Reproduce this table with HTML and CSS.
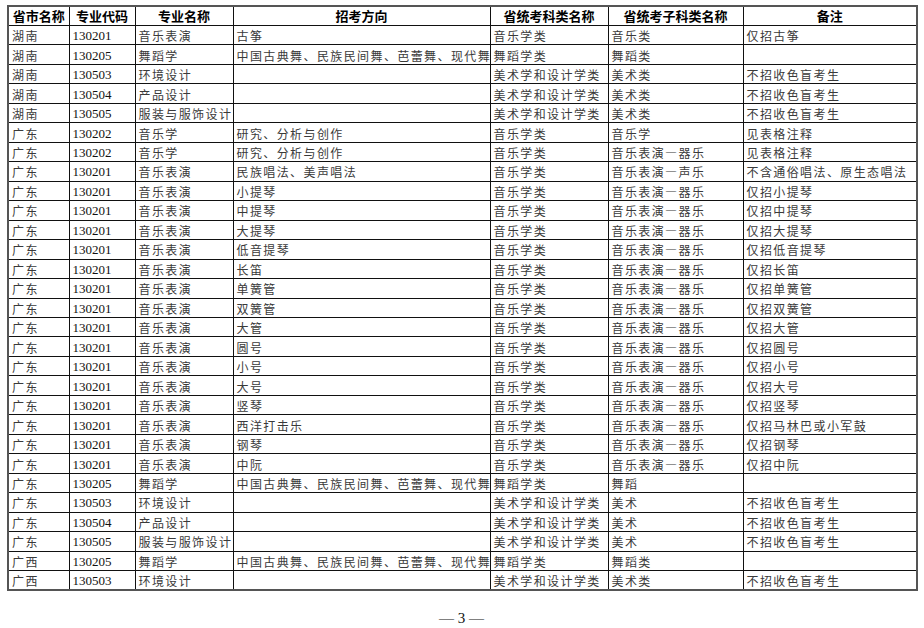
FILE: index.html
```html
<!DOCTYPE html>
<html lang="zh-CN">
<head>
<meta charset="utf-8">
<link rel="stylesheet" href="styles.css">
</head>
<body>
<div class="page">
<table class="grid">
<colgroup>
<col class="c1"><col class="c2"><col class="c3"><col class="c4"><col class="c5"><col class="c6"><col class="c7">
</colgroup>
<thead>
<tr><th>省市名称</th><th>专业代码</th><th>专业名称</th><th>招考方向</th><th>省统考科类名称</th><th>省统考子科类名称</th><th>备注</th></tr>
</thead>
<tbody>
<tr><td>湖南</td><td class="num">130201</td><td>音乐表演</td><td>古筝</td><td>音乐学类</td><td>音乐类</td><td>仅招古筝</td></tr>
<tr><td>湖南</td><td class="num">130205</td><td>舞蹈学</td><td>中国古典舞、民族民间舞、芭蕾舞、现代舞</td><td>舞蹈学类</td><td>舞蹈类</td><td></td></tr>
<tr><td>湖南</td><td class="num">130503</td><td>环境设计</td><td></td><td>美术学和设计学类</td><td>美术类</td><td>不招收色盲考生</td></tr>
<tr><td>湖南</td><td class="num">130504</td><td>产品设计</td><td></td><td>美术学和设计学类</td><td>美术类</td><td>不招收色盲考生</td></tr>
<tr><td>湖南</td><td class="num">130505</td><td>服装与服饰设计</td><td></td><td>美术学和设计学类</td><td>美术类</td><td>不招收色盲考生</td></tr>
<tr><td>广东</td><td class="num">130202</td><td>音乐学</td><td>研究、分析与创作</td><td>音乐学类</td><td>音乐学</td><td>见表格注释</td></tr>
<tr><td>广东</td><td class="num">130202</td><td>音乐学</td><td>研究、分析与创作</td><td>音乐学类</td><td>音乐表演—器乐</td><td>见表格注释</td></tr>
<tr><td>广东</td><td class="num">130201</td><td>音乐表演</td><td>民族唱法、美声唱法</td><td>音乐学类</td><td>音乐表演—声乐</td><td>不含通俗唱法、原生态唱法</td></tr>
<tr><td>广东</td><td class="num">130201</td><td>音乐表演</td><td>小提琴</td><td>音乐学类</td><td>音乐表演—器乐</td><td>仅招小提琴</td></tr>
<tr><td>广东</td><td class="num">130201</td><td>音乐表演</td><td>中提琴</td><td>音乐学类</td><td>音乐表演—器乐</td><td>仅招中提琴</td></tr>
<tr><td>广东</td><td class="num">130201</td><td>音乐表演</td><td>大提琴</td><td>音乐学类</td><td>音乐表演—器乐</td><td>仅招大提琴</td></tr>
<tr><td>广东</td><td class="num">130201</td><td>音乐表演</td><td>低音提琴</td><td>音乐学类</td><td>音乐表演—器乐</td><td>仅招低音提琴</td></tr>
<tr><td>广东</td><td class="num">130201</td><td>音乐表演</td><td>长笛</td><td>音乐学类</td><td>音乐表演—器乐</td><td>仅招长笛</td></tr>
<tr><td>广东</td><td class="num">130201</td><td>音乐表演</td><td>单簧管</td><td>音乐学类</td><td>音乐表演—器乐</td><td>仅招单簧管</td></tr>
<tr><td>广东</td><td class="num">130201</td><td>音乐表演</td><td>双簧管</td><td>音乐学类</td><td>音乐表演—器乐</td><td>仅招双簧管</td></tr>
<tr><td>广东</td><td class="num">130201</td><td>音乐表演</td><td>大管</td><td>音乐学类</td><td>音乐表演—器乐</td><td>仅招大管</td></tr>
<tr><td>广东</td><td class="num">130201</td><td>音乐表演</td><td>圆号</td><td>音乐学类</td><td>音乐表演—器乐</td><td>仅招圆号</td></tr>
<tr><td>广东</td><td class="num">130201</td><td>音乐表演</td><td>小号</td><td>音乐学类</td><td>音乐表演—器乐</td><td>仅招小号</td></tr>
<tr><td>广东</td><td class="num">130201</td><td>音乐表演</td><td>大号</td><td>音乐学类</td><td>音乐表演—器乐</td><td>仅招大号</td></tr>
<tr><td>广东</td><td class="num">130201</td><td>音乐表演</td><td>竖琴</td><td>音乐学类</td><td>音乐表演—器乐</td><td>仅招竖琴</td></tr>
<tr><td>广东</td><td class="num">130201</td><td>音乐表演</td><td>西洋打击乐</td><td>音乐学类</td><td>音乐表演—器乐</td><td>仅招马林巴或小军鼓</td></tr>
<tr><td>广东</td><td class="num">130201</td><td>音乐表演</td><td>钢琴</td><td>音乐学类</td><td>音乐表演—器乐</td><td>仅招钢琴</td></tr>
<tr><td>广东</td><td class="num">130201</td><td>音乐表演</td><td>中阮</td><td>音乐学类</td><td>音乐表演—器乐</td><td>仅招中阮</td></tr>
<tr><td>广东</td><td class="num">130205</td><td>舞蹈学</td><td>中国古典舞、民族民间舞、芭蕾舞、现代舞</td><td>舞蹈学类</td><td>舞蹈</td><td></td></tr>
<tr><td>广东</td><td class="num">130503</td><td>环境设计</td><td></td><td>美术学和设计学类</td><td>美术</td><td>不招收色盲考生</td></tr>
<tr><td>广东</td><td class="num">130504</td><td>产品设计</td><td></td><td>美术学和设计学类</td><td>美术</td><td>不招收色盲考生</td></tr>
<tr><td>广东</td><td class="num">130505</td><td>服装与服饰设计</td><td></td><td>美术学和设计学类</td><td>美术</td><td>不招收色盲考生</td></tr>
<tr><td>广西</td><td class="num">130205</td><td>舞蹈学</td><td>中国古典舞、民族民间舞、芭蕾舞、现代舞</td><td>舞蹈学类</td><td>舞蹈类</td><td></td></tr>
<tr><td>广西</td><td class="num">130503</td><td>环境设计</td><td></td><td>美术学和设计学类</td><td>美术类</td><td>不招收色盲考生</td></tr>
</tbody>
</table>
<div class="folio">— 3 —</div>
</div>
</body>
</html>
```

FILE: styles.css
```css
html, body {
  margin: 0;
  padding: 0;
  background: #fff;
}

.page {
  padding: 5px 0 0 7px;
  font-family: "Liberation Serif", "Noto Sans CJK SC", serif;
  color: #2a2a2a;
}

.grid {
  border-collapse: collapse;
  table-layout: fixed;
  width: 909px;
  border: 2px solid #555;
}

.c1 { width: 61px; }
.c2 { width: 66px; }
.c3 { width: 98px; }
.c4 { width: 257px; }
.c5 { width: 118px; }
.c6 { width: 135px; }
.c7 { width: 174px; }

.grid tr {
  height: 19.47px;
}

.grid th,
.grid td {
  border: 1px solid #111;
  height: 18.47px;
  box-sizing: border-box;
  padding: 0 0 0 3px;
  white-space: nowrap;
  overflow: hidden;
  text-align: left;
  vertical-align: middle;
  line-height: 15px;
}

.grid td {
  font-family: "Noto Sans CJK SC", sans-serif;
  font-size: 12px;
  letter-spacing: 1.4px;
  font-weight: 400;
  color: #3a3a3a;
  padding-top: 1px;
}

.grid td.num {
  font-family: "Liberation Serif", serif;
  font-size: 13px;
  letter-spacing: 0;
  color: #111;
}

.grid th {
  font-family: "Noto Sans CJK SC", sans-serif;
  font-size: 13px;
  font-weight: 700;
  text-align: center;
  color: #000;
  padding-left: 0;
}

.folio {
  width: 909px;
  margin-top: 19px;
  text-align: center;
  font-family: "Liberation Serif", serif;
  font-size: 15px;
  line-height: 17px;
  color: #111;
}
```
